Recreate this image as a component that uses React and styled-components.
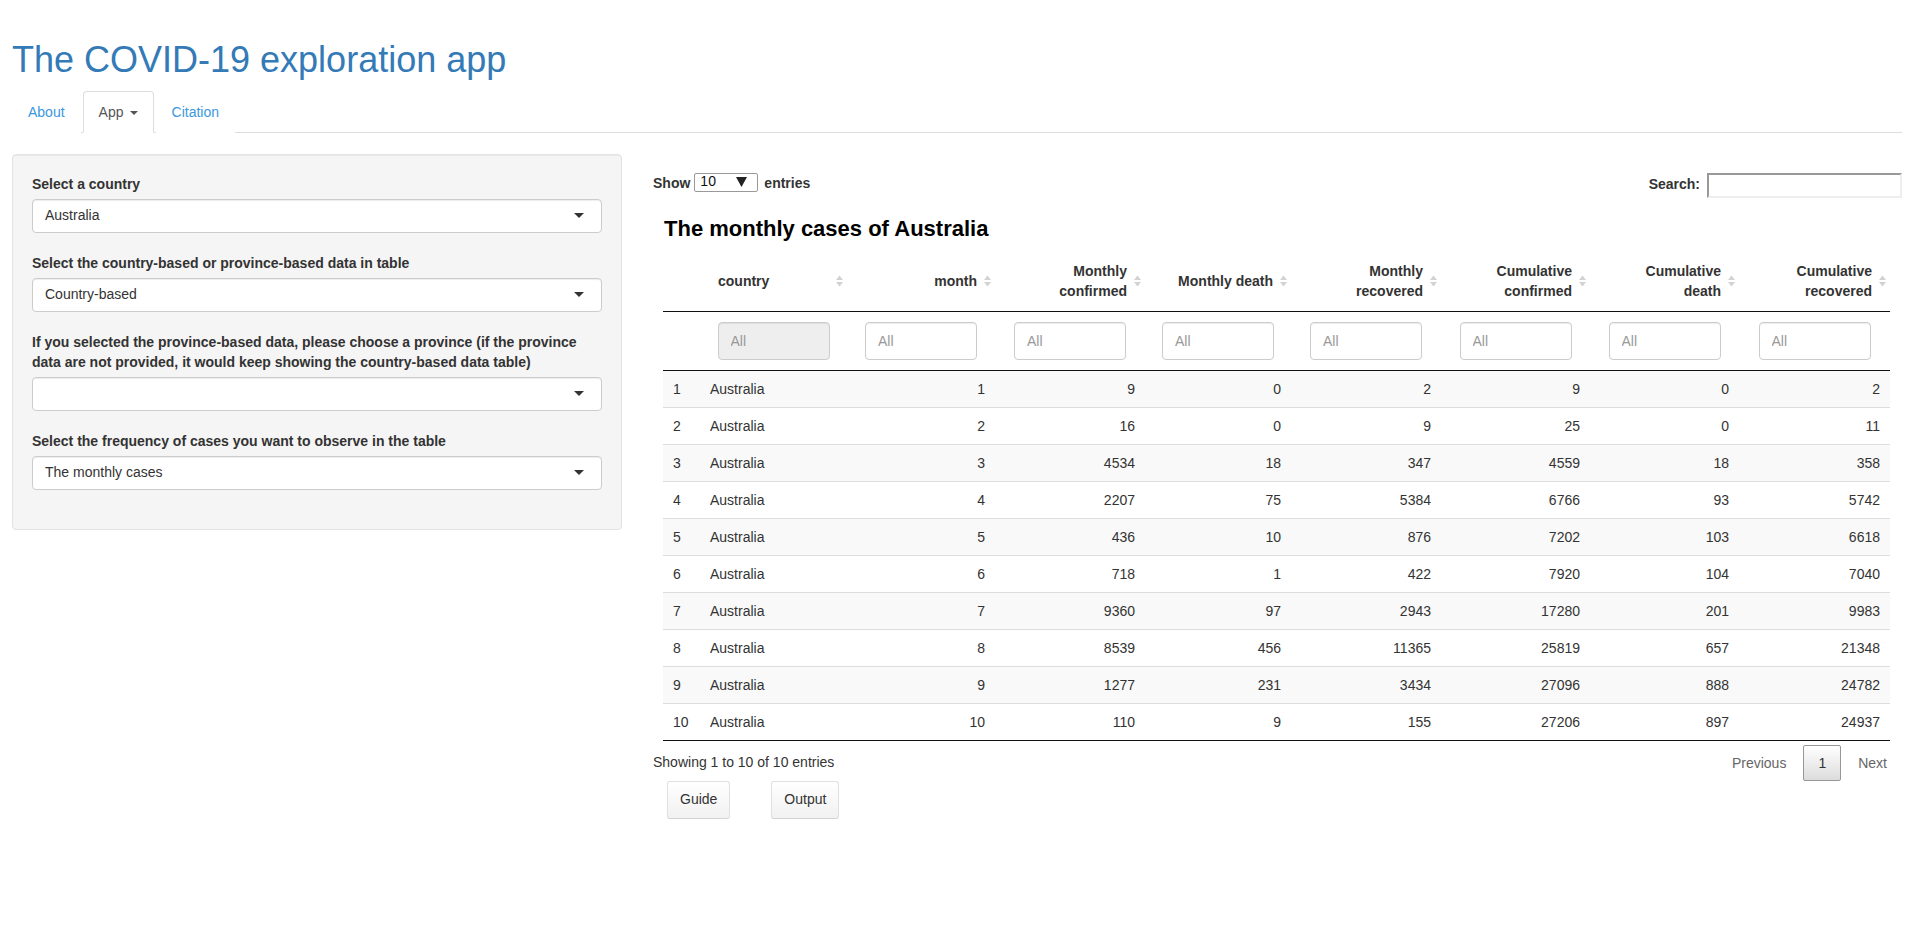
import React from "react";
import styled, { createGlobalStyle } from "styled-components";

const GlobalStyle = createGlobalStyle`
  html, body { margin: 0; padding: 0; background: #fff; }
  body {
    font-family: "Liberation Sans", Arial, Helvetica, sans-serif;
    font-size: 14px;
    line-height: 1.42857;
    color: #333;
  }
  *, *::before, *::after { box-sizing: border-box; }
`;

const Page = styled.div`
  padding: 0 9px 0 12px;
`;

const Title = styled.h1`
  margin: 40px 0 11px;
  font-size: 36px;
  font-weight: 400;
  line-height: 1.1;
  color: #337ab7;
`;

const Nav = styled.ul`
  list-style: none;
  margin: 0;
  padding: 0;
  display: flex;
  border-bottom: 1px solid #ddd;
`;

const Tab = styled.li`
  margin: 0 2px -1px 0;
`;

const TabLink = styled.a`
  display: block;
  padding: 10px 15px;
  line-height: 20px;
  border: 1px solid ${(p) => (p.$active ? "#ddd" : "transparent")};
  border-bottom-color: ${(p) => (p.$active ? "#fff" : "transparent")};
  border-radius: 4px 4px 0 0;
  background: #fff;
  color: ${(p) => (p.$active ? "#555" : "#3b97de")};
  text-decoration: none;
`;

const Caret = styled.span`
  display: inline-block;
  width: 0;
  height: 0;
  margin-left: 6px;
  vertical-align: middle;
  border-top: 4px solid #555;
  border-left: 4px solid transparent;
  border-right: 4px solid transparent;
`;

const Content = styled.div`
  display: flex;
  align-items: flex-start;
  padding-top: 21px;
`;

const Well = styled.div`
  flex: 0 0 610px;
  padding: 19px;
  background: #f5f5f5;
  border: 1px solid #e3e3e3;
  border-radius: 4px;
  box-shadow: inset 0 1px 1px rgba(0, 0, 0, 0.05);
`;

const FormGroup = styled.div`
  margin-bottom: 20px;
`;

const Label = styled.label`
  display: block;
  font-weight: bold;
  line-height: 20px;
  margin-bottom: 5px;
`;

const SelectBox = styled.div`
  height: 34px;
  display: flex;
  align-items: center;
  justify-content: space-between;
  padding: 6px 12px;
  background: #fff;
  border: 1px solid #ccc;
  border-radius: 4px;
  box-shadow: inset 0 1px 1px rgba(0, 0, 0, 0.075);
  color: #333;
`;

const SelectCaret = styled.span`
  width: 0;
  height: 0;
  margin-right: 5px;
  border-top: 5px solid #333;
  border-left: 5px solid transparent;
  border-right: 5px solid transparent;
`;

const Main = styled.div`
  flex: 1;
  min-width: 0;
  margin-left: 31px;
  padding-top: 19px;
`;

const Controls = styled.div`
  display: flex;
  justify-content: space-between;
  align-items: flex-start;
  height: 27px;
`;

const Length = styled.div`
  display: flex;
  align-items: center;
  height: 19px;
  padding-top: 3px;
  font-weight: bold;
`;

const LengthSelect = styled.div`
  width: 64px;
  height: 19px;
  margin: -3px 6px 0 4px;
  padding: 0 10px 0 5px;
  display: flex;
  align-items: center;
  justify-content: space-between;
  border: 1px solid #999;
  border-radius: 2px;
  font-weight: normal;
  font-size: 14px;
  color: #111;
`;

const Search = styled.div`
  display: flex;
  align-items: center;
  gap: 7px;
  font-weight: bold;
`;

const SearchInput = styled.input`
  width: 195px;
  height: 25px;
  border-style: solid;
  border-width: 2px;
  border-color: #999 #eee #eee #999;
  padding: 1px 4px;
  font: inherit;
  outline: none;
`;

const Table = styled.table`
  width: 1227px;
  margin: 0 12px 0 10px;
  table-layout: fixed;
  border-collapse: collapse;
  border-spacing: 0;
`;

const Caption = styled.caption`
  caption-side: top;
  text-align: left;
  padding: 13px 0 7px 1px;
  font-size: 22px;
  font-weight: bold;
  line-height: 31px;
  color: #000;
`;

const Col = styled.col`
  width: ${(p) => p.$w}px;
`;

const HeadCell = styled.th`
  position: relative;
  padding: ${(p) => (p.$index ? "10px" : "10px 18px")};
  text-align: ${(p) => p.$align};
  vertical-align: middle;
  font-weight: bold;
  line-height: 20px;
  border-bottom: 1px solid #111;
`;

const SortIcon = styled.svg`
  position: absolute;
  right: 4px;
  top: 50%;
  transform: translateY(-50%);
`;

const FilterCell = styled.td`
  padding: 10px 0;
  text-align: center;
  border-bottom: 1px solid #111;
`;

const FilterInput = styled.input`
  width: 112px;
  height: 38px;
  padding: 6px 12px;
  border: 1px solid #ccc;
  border-radius: 4px;
  background: ${(p) => (p.disabled ? "#eee" : "#fff")};
  box-shadow: inset 0 1px 1px rgba(0, 0, 0, 0.075);
  font: inherit;
  color: #555;
  outline: none;
  &::placeholder { color: #999; }
`;

const BodyRow = styled.tr`
  background: ${(p) => (p.$odd ? "#f9f9f9" : "#fff")};
  &:first-child td { border-top: none; }
  &:last-child td { border-bottom: 1px solid #111; }
`;

const Cell = styled.td`
  padding: 8px 10px;
  line-height: 20px;
  border-top: 1px solid #ddd;
  text-align: ${(p) => p.$align};
  white-space: nowrap;
  color: #333;
`;

const Footer = styled.div`
  display: flex;
  justify-content: space-between;
  align-items: flex-start;
  margin-top: 4px;
`;

const Info = styled.div`
  padding-top: 7px;
  line-height: 20px;
`;

const Pagination = styled.div`
  display: flex;
`;

const PageButton = styled.span`
  margin-left: 2px;
  padding: 7px 14px;
  line-height: 20px;
  border: 1px solid ${(p) => (p.$current ? "#979797" : "transparent")};
  border-radius: 2px;
  color: ${(p) => (p.$current ? "#333" : "#666")};
  background: ${(p) =>
    p.$current ? "linear-gradient(to bottom, #fff 0%, #dcdcdc 100%)" : "transparent"};
`;

const Buttons = styled.div`
  display: flex;
  gap: 41px;
  padding-left: 14px;
`;

const Button = styled.button`
  padding: 8px 12px;
  line-height: 20px;
  font: inherit;
  color: #333;
  background: linear-gradient(to bottom, #fff 0%, #f1f1f1 100%);
  border: 1px solid #e0e0e0;
  border-bottom-color: #d4d4d4;
  border-radius: 3px;
  box-shadow: 0 1px 1px rgba(0, 0, 0, 0.04);
`;

const colWidths = [37, 147, 148, 150, 146, 150, 149, 149, 151];

const headers = [
  { label: [""], align: "left", index: true },
  { label: ["country"], align: "left" },
  { label: ["month"], align: "right" },
  { label: ["Monthly", "confirmed"], align: "right" },
  { label: ["Monthly death"], align: "right" },
  { label: ["Monthly", "recovered"], align: "right" },
  { label: ["Cumulative", "confirmed"], align: "right" },
  { label: ["Cumulative", "death"], align: "right" },
  { label: ["Cumulative", "recovered"], align: "right" },
];

const rows = [
  [1, 9, 0, 2, 9, 0, 2],
  [2, 16, 0, 9, 25, 0, 11],
  [3, 4534, 18, 347, 4559, 18, 358],
  [4, 2207, 75, 5384, 6766, 93, 5742],
  [5, 436, 10, 876, 7202, 103, 6618],
  [6, 718, 1, 422, 7920, 104, 7040],
  [7, 9360, 97, 2943, 17280, 201, 9983],
  [8, 8539, 456, 11365, 25819, 657, 21348],
  [9, 1277, 231, 3434, 27096, 888, 24782],
  [10, 110, 9, 155, 27206, 897, 24937],
];

const fields = [
  { label: ["Select a country"], value: "Australia" },
  { label: ["Select the country-based or province-based data in table"], value: "Country-based" },
  {
    label: [
      "If you selected the province-based data, please choose a province (if the province",
      "data are not provided, it would keep showing the country-based data table)",
    ],
    value: "",
  },
  { label: ["Select the frequency of cases you want to observe in the table"], value: "The monthly cases" },
];

function Sort() {
  return (
    <SortIcon width="7" height="12" viewBox="0 0 7 12">
      <polygon points="0,5 3.5,0.5 7,5" fill="#d2d2d2" />
      <polygon points="0,7 3.5,11.5 7,7" fill="#d2d2d2" />
    </SortIcon>
  );
}

function Lines({ lines }) {
  return lines.map((l, j) => (
    <React.Fragment key={j}>
      {j > 0 && <br />}
      {l}
    </React.Fragment>
  ));
}

export default function App() {
  return (
    <Page>
      <GlobalStyle />
      <Title>The COVID-19 exploration app</Title>
      <Nav>
        <Tab><TabLink href="#">About</TabLink></Tab>
        <Tab><TabLink href="#" $active>App<Caret /></TabLink></Tab>
        <Tab><TabLink href="#">Citation</TabLink></Tab>
      </Nav>
      <Content>
        <Well>
          {fields.map((f, i) => (
            <FormGroup key={i}>
              <Label>
                <Lines lines={f.label} />
              </Label>
              <SelectBox>
                <span>{f.value}</span>
                <SelectCaret />
              </SelectBox>
            </FormGroup>
          ))}
        </Well>
        <Main>
          <Controls>
            <Length>
              Show
              <LengthSelect>
                <span>10</span>
                <svg width="11" height="10" viewBox="0 0 11 10">
                  <polygon points="0,0 11,0 5.5,10" fill="#222" />
                </svg>
              </LengthSelect>
              entries
            </Length>
            <Search>
              Search:
              <SearchInput type="text" />
            </Search>
          </Controls>
          <Table>
            <Caption>The monthly cases of Australia</Caption>
            <colgroup>
              {colWidths.map((w, i) => (
                <Col key={i} $w={w} />
              ))}
            </colgroup>
            <thead>
              <tr>
                {headers.map((h, i) => (
                  <HeadCell key={i} $align={h.align} $index={h.index}>
                    <Lines lines={h.label} />
                    {!h.index && <Sort />}
                  </HeadCell>
                ))}
              </tr>
              <tr>
                {headers.map((h, i) => (
                  <FilterCell key={i}>
                    {!h.index && (
                      <FilterInput type="text" placeholder="All" disabled={i === 1} />
                    )}
                  </FilterCell>
                ))}
              </tr>
            </thead>
            <tbody>
              {rows.map((r, i) => (
                <BodyRow key={i} $odd={i % 2 === 0}>
                  <Cell $align="left">{i + 1}</Cell>
                  <Cell $align="left">Australia</Cell>
                  {r.map((v, j) => (
                    <Cell key={j} $align="right">{v}</Cell>
                  ))}
                </BodyRow>
              ))}
            </tbody>
          </Table>
          <Footer>
            <Info>Showing 1 to 10 of 10 entries</Info>
            <Pagination>
              <PageButton>Previous</PageButton>
              <PageButton $current>1</PageButton>
              <PageButton>Next</PageButton>
            </Pagination>
          </Footer>
          <Buttons>
            <Button>Guide</Button>
            <Button>Output</Button>
          </Buttons>
        </Main>
      </Content>
    </Page>
  );
}
